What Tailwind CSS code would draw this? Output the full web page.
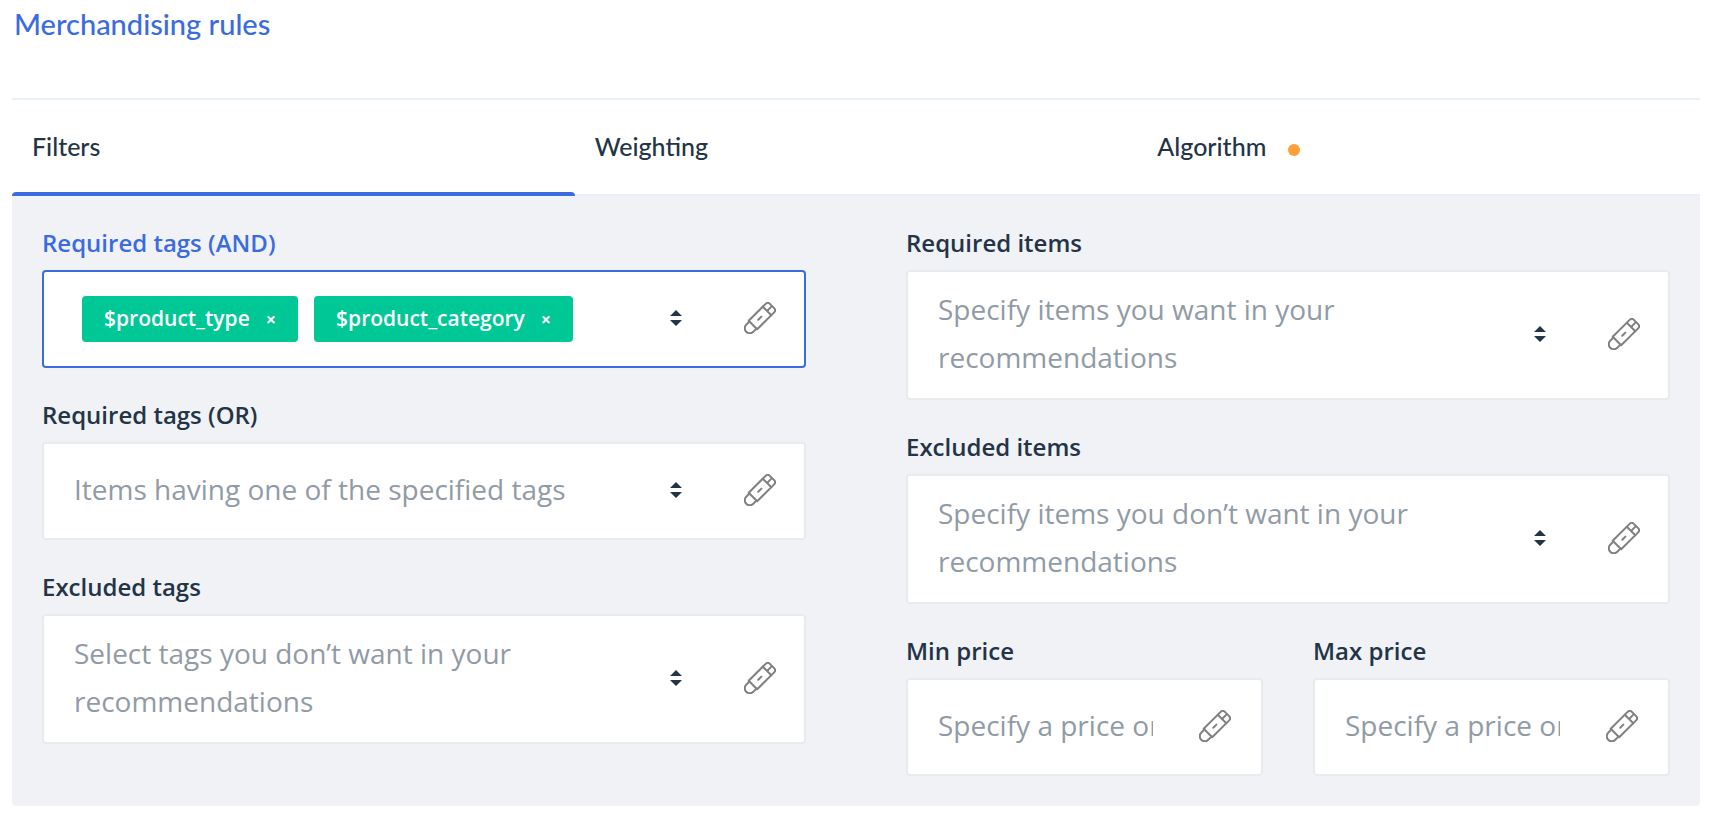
<!DOCTYPE html>
<html lang="en">
<head>
  <meta charset="UTF-8" />
  <title>Merchandising rules</title>
  <script src="https://cdn.jsdelivr.net/npm/@tailwindcss/browser@4"></script>
</head>
<body class="min-h-screen bg-white font-['Open_Sans',sans-serif] text-[#243447]">
  <!-- Shared icons -->
  <svg class="hidden">
    <symbol id="icon-sort" viewBox="0 0 12 16">
      <path d="M6 0l6 6H0zM6 16l6-6H0z" fill="#243447" />
    </symbol>
    <symbol id="icon-eraser" viewBox="0 0 32 32">
      <g transform="rotate(-45 16 16)" fill="none" stroke="#808080" stroke-width="2" stroke-linecap="round" stroke-linejoin="round">
        <path d="M6 10h24a3 3 0 0 1 3 3v6a3 3 0 0 1-3 3H6z" />
        <path d="M6 11H1.500a5 5 0 0 0-5 5 5 5 0 0 0 5 5H6" />
        <path d="M26 10v12M26 16h6.500M13.500 16h4.500" />
      </g>
    </symbol>
  </svg>

  <div class="pl-3 pr-[10px]">
    <h1 class="h-[98px] pl-[2px] pt-1 font-[Lato,sans-serif] text-[29px] leading-10 font-medium text-[#3b6cdf]">Merchandising rules</h1>

    <!-- Tabs -->
    <nav class="grid grid-cols-3 border-y-2 border-[#e9effd] font-[Lato,sans-serif] text-[25px] leading-[92px] font-medium">
      <a href="#filters" class="relative pb-[2px] pl-5">
        Filters
        <span class="absolute inset-x-0 -bottom-[2px] h-1 rounded-t bg-[#3b6cdf]"></span>
      </a>
      <a href="#weighting" class="pb-[2px] pl-5">Weighting</a>
      <a href="#algorithm" class="flex items-center gap-[22px] pb-[2px] pl-5">
        Algorithm
        <span class="mt-2 size-3 rounded-full bg-[#ff9f38]"></span>
      </a>
    </nav>

    <!-- Filters panel -->
    <div id="filters" class="grid grid-cols-2 items-start gap-x-[100px] rounded-b bg-[#f0f2f6] p-[30px]">
      <div class="flex flex-col gap-[30px]">
        <div>
          <label for="required-and" class="mb-[10px] block text-2xl leading-[34px] font-semibold text-[#3b6cdf]">Required tags (AND)</label>
          <div class="flex h-[98px] items-center rounded border-2 border-[#3b6cdf] bg-white pr-7 pl-[30px]">
            <div class="flex gap-4 pl-2">
              <span class="flex h-[46px] items-center gap-4 rounded bg-[#00c796] px-[22px] pb-px text-[21px] font-semibold text-white">
                $product_type
                <button type="button" aria-label="Remove $product_type" class="text-lg font-bold">×</button>
              </span>
              <span class="flex h-[46px] items-center gap-4 rounded bg-[#00c796] px-[22px] pb-px text-[21px] font-semibold text-white">
                $product_category
                <button type="button" aria-label="Remove $product_category" class="text-lg font-bold">×</button>
              </span>
            </div>
            <select id="required-and" class="h-12 min-w-0 flex-1 appearance-none outline-none"></select>
            <svg class="pointer-events-none mb-[2px] h-4 w-3 shrink-0"><use href="#icon-sort" /></svg>
            <button type="button" aria-label="Clear" class="mb-[2px] ml-[62px] shrink-0"><svg class="size-8 overflow-visible"><use href="#icon-eraser" /></svg></button>
          </div>
        </div>

        <div>
          <label for="required-or" class="mb-[10px] block text-2xl leading-[34px] font-semibold">Required tags (OR)</label>
          <div class="flex h-[98px] items-center rounded border-2 border-[#e8ebed] bg-white pr-7 pl-[30px]">
            <select id="required-or" class="mb-1 h-12 min-w-0 flex-1 appearance-none text-[28px] leading-[48px] text-[#919ba5] outline-none">
              <option>Items having one of the specified tags</option>
            </select>
            <svg class="pointer-events-none mb-[2px] h-4 w-3 shrink-0"><use href="#icon-sort" /></svg>
            <button type="button" aria-label="Clear" class="mb-[2px] ml-[62px] shrink-0"><svg class="size-8 overflow-visible"><use href="#icon-eraser" /></svg></button>
          </div>
        </div>

        <div>
          <label for="excluded-tags" class="mb-[10px] block text-2xl leading-[34px] font-semibold">Excluded tags</label>
          <div class="flex h-[130px] items-center rounded border-2 border-[#e8ebed] bg-white pr-7 pl-[30px]">
            <select id="excluded-tags" class="mb-1 h-24 min-w-0 flex-1 appearance-none text-[28px] leading-[48px] whitespace-normal text-[#919ba5] outline-none">
              <option>Select tags you don’t want in your recommendations</option>
            </select>
            <svg class="pointer-events-none mb-[2px] h-4 w-3 shrink-0"><use href="#icon-sort" /></svg>
            <button type="button" aria-label="Clear" class="mb-[2px] ml-[62px] shrink-0"><svg class="size-8 overflow-visible"><use href="#icon-eraser" /></svg></button>
          </div>
        </div>
      </div>

      <div class="flex flex-col gap-[30px]">
        <div>
          <label for="required-items" class="mb-[10px] block text-2xl leading-[34px] font-semibold">Required items</label>
          <div class="flex h-[130px] items-center rounded border-2 border-[#e8ebed] bg-white pr-7 pl-[30px]">
            <select id="required-items" class="mb-1 h-24 min-w-0 flex-1 appearance-none text-[28px] leading-[48px] whitespace-normal text-[#919ba5] outline-none">
              <option>Specify items you want in your recommendations</option>
            </select>
            <svg class="pointer-events-none mb-[2px] h-4 w-3 shrink-0"><use href="#icon-sort" /></svg>
            <button type="button" aria-label="Clear" class="mb-[2px] ml-[62px] shrink-0"><svg class="size-8 overflow-visible"><use href="#icon-eraser" /></svg></button>
          </div>
        </div>

        <div>
          <label for="excluded-items" class="mb-[10px] block text-2xl leading-[34px] font-semibold">Excluded items</label>
          <div class="flex h-[130px] items-center rounded border-2 border-[#e8ebed] bg-white pr-7 pl-[30px]">
            <select id="excluded-items" class="mb-1 h-24 min-w-0 flex-1 appearance-none text-[28px] leading-[48px] whitespace-normal text-[#919ba5] outline-none">
              <option>Specify items you don’t want in your recommendations</option>
            </select>
            <svg class="pointer-events-none mb-[2px] h-4 w-3 shrink-0"><use href="#icon-sort" /></svg>
            <button type="button" aria-label="Clear" class="mb-[2px] ml-[62px] shrink-0"><svg class="size-8 overflow-visible"><use href="#icon-eraser" /></svg></button>
          </div>
        </div>

        <div class="grid grid-cols-2 gap-[50px]">
          <div>
            <label for="min-price" class="mb-[10px] block text-2xl leading-[34px] font-semibold">Min price</label>
            <div class="flex h-[98px] items-center rounded border-2 border-[#e8ebed] bg-white px-[30px]">
              <input id="min-price" type="text" placeholder="Specify a price or expression" class="mb-1 h-12 min-w-0 flex-1 text-[28px] placeholder-[#919ba5] outline-none" />
              <button type="button" aria-label="Clear" class="mb-[2px] ml-[46px] shrink-0"><svg class="size-8 overflow-visible"><use href="#icon-eraser" /></svg></button>
            </div>
          </div>
          <div>
            <label for="max-price" class="mb-[10px] block text-2xl leading-[34px] font-semibold">Max price</label>
            <div class="flex h-[98px] items-center rounded border-2 border-[#e8ebed] bg-white px-[30px]">
              <input id="max-price" type="text" placeholder="Specify a price or expression" class="mb-1 h-12 min-w-0 flex-1 text-[28px] placeholder-[#919ba5] outline-none" />
              <button type="button" aria-label="Clear" class="mb-[2px] ml-[46px] shrink-0"><svg class="size-8 overflow-visible"><use href="#icon-eraser" /></svg></button>
            </div>
          </div>
        </div>
      </div>
    </div>
  </div>
</body>
</html>
